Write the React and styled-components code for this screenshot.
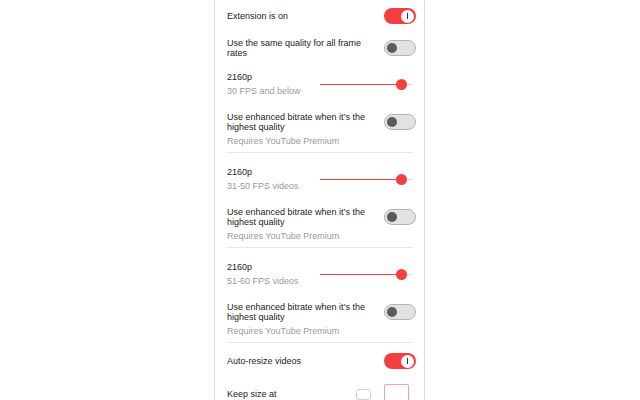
import React from "react";
import styled, { createGlobalStyle } from "styled-components";

const RED = "#f43f3f";

const Global = createGlobalStyle`
  html, body { margin: 0; padding: 0; background: #ffffff; }
  body { font-family: "Liberation Sans", Arial, sans-serif; }
`;

const Page = styled.div`
  width: 640px;
  height: 400px;
  overflow: hidden;
  background: #ffffff;
`;

const Panel = styled.div`
  box-sizing: border-box;
  width: 211px;
  min-height: 400px;
  margin-left: 214px;
  padding: 8px 8px 0 12px;
  border-left: 1px solid #dcdcdc;
  border-right: 1px solid #dcdcdc;
  font-size: 9px;
  line-height: 10px;
  color: #222222;
  display: flex;
  flex-direction: column;
`;

const Row = styled.div`
  display: flex;
  justify-content: space-between;
  align-items: ${(p) => p.$align || "center"};
  margin-top: ${(p) => p.$mt || 0}px;
`;

const Label = styled.div`
  max-width: 146px;
  margin-top: ${(p) => p.$mt || 0}px;
`;

const Sub = styled.div`
  margin-top: 4px;
  color: #9a9a9a;
`;

const Toggle = styled.div`
  box-sizing: border-box;
  width: 32px;
  height: 16px;
  border-radius: 8px;
  flex: none;
  display: flex;
  align-items: center;
  justify-content: ${(p) => (p.$on ? "flex-end" : "flex-start")};
  padding: 0 ${(p) => (p.$on ? 2 : 1.5)}px;
  background: ${(p) => (p.$on ? RED : "#e2e2e2")};
  border: ${(p) => (p.$on ? "none" : "1px solid #b4b4b4")};
`;

const Knob = styled.div`
  width: ${(p) => (p.$on ? 13 : 10)}px;
  height: ${(p) => (p.$on ? 13 : 10)}px;
  border-radius: 50%;
  background: ${(p) => (p.$on ? "#ffffff" : "#5a5a5a")};
  display: flex;
  align-items: center;
  justify-content: center;
  &::after {
    content: "";
    display: ${(p) => (p.$on ? "block" : "none")};
    width: 1px;
    height: 6px;
    background: #333333;
  }
`;

const Slider = styled.div`
  width: 93px;
  margin-right: 3px;
  display: flex;
  align-items: center;
  flex: none;
`;

const Fill = styled.div`
  width: 76px;
  height: 1px;
  background: ${RED};
`;

const Thumb = styled.div`
  width: 11px;
  height: 11px;
  border-radius: 50%;
  background: ${RED};
  flex: none;
`;

const Rest = styled.div`
  flex: 1;
  height: 1px;
  background: #dddddd;
`;

const Group = styled.div`
  padding: 14px 0 6px;
  border-bottom: 1px solid #e9e9e9;
  margin-left: -1px;
  margin-right: 3px;
  padding-left: 1px;
`;

const GroupBody = styled.div`
  margin-right: -3px;
`;

const SmallBox = styled.div`
  box-sizing: border-box;
  width: 15px;
  height: 11px;
  margin-top: 5px;
  border: 1px solid #d0d0d0;
  border-radius: 3px;
`;

const InputBox = styled.div`
  box-sizing: border-box;
  width: 25px;
  height: 24px;
  margin-left: 13px;
  margin-right: 7px;
  border: 1px solid #f7a0a0;
  border-radius: 2px;
`;

const Controls = styled.div`
  display: flex;
  align-items: flex-start;
`;

const Switch = ({ on }) => (
  <Toggle $on={on}>
    <Knob $on={on} />
  </Toggle>
);

const QualityGroup = ({ sub }) => (
  <Group>
    <GroupBody>
      <Row>
        <div>
          <div>2160p</div>
          <Sub>{sub}</Sub>
        </div>
        <Slider>
          <Fill />
          <Thumb />
          <Rest />
        </Slider>
      </Row>
      <Row $mt={16}>
        <Label>Use enhanced bitrate when it’s the highest quality</Label>
        <Switch on={false} />
      </Row>
      <Sub>Requires YouTube Premium</Sub>
    </GroupBody>
  </Group>
);

export default function App() {
  return (
    <Page>
      <Global />
      <Panel>
        <Row>
          <Label>Extension is on</Label>
          <Switch on />
        </Row>
        <Row $mt={14}>
          <Label>Use the same quality for all frame rates</Label>
          <Switch on={false} />
        </Row>
        <QualityGroup sub="30 FPS and below" />
        <QualityGroup sub="31-50 FPS videos" />
        <QualityGroup sub="51-60 FPS videos" />
        <Row $mt={10}>
          <Label>Auto-resize videos</Label>
          <Switch on />
        </Row>
        <Row $mt={15} $align="flex-start">
          <Label $mt={5}>Keep size at</Label>
          <Controls>
            <SmallBox />
            <InputBox />
          </Controls>
        </Row>
      </Panel>
    </Page>
  );
}
